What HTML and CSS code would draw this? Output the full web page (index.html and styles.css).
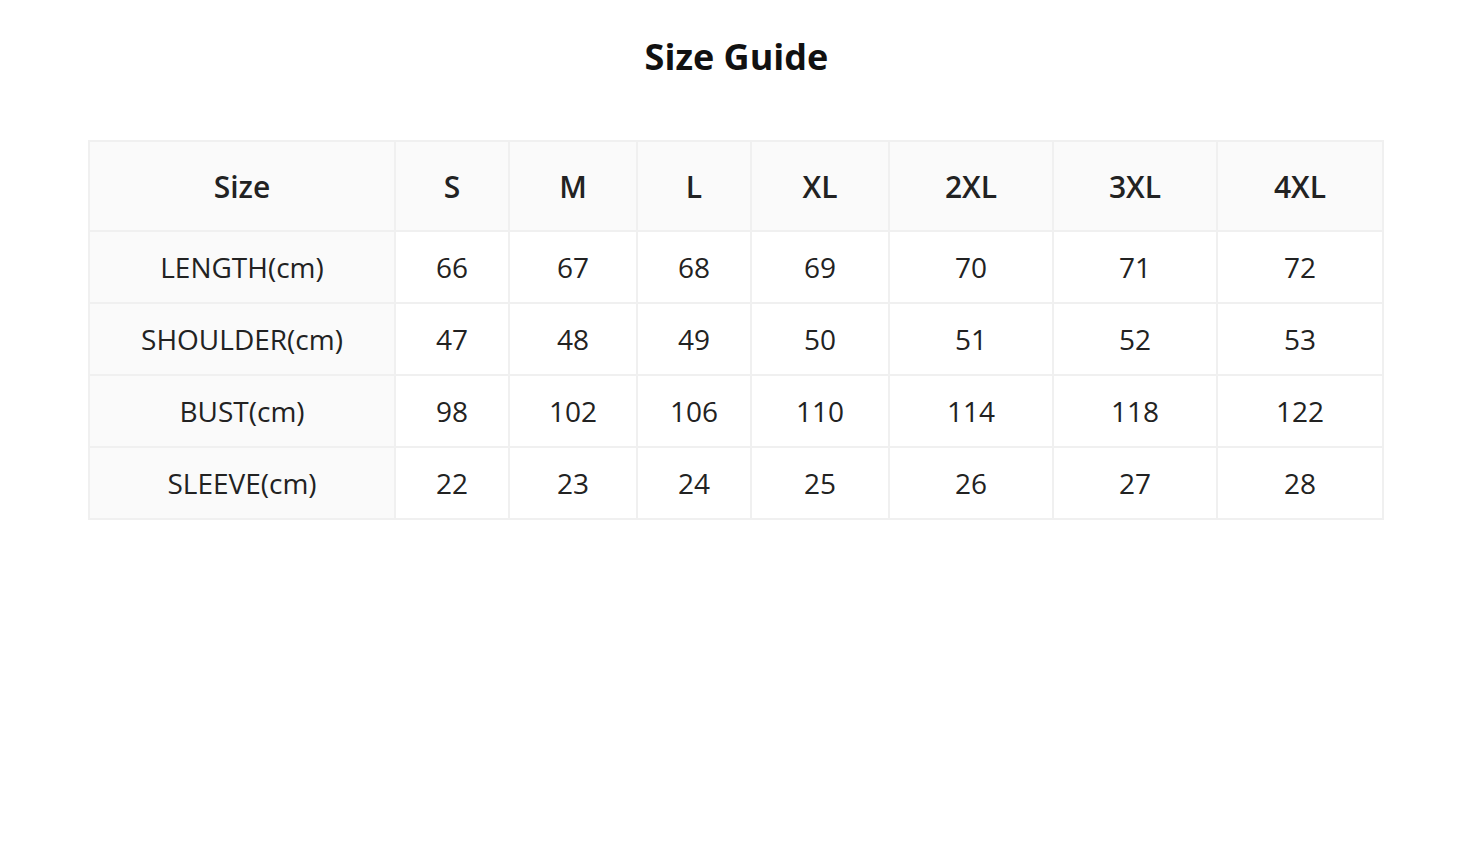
FILE: index.html
```html
<!DOCTYPE html>
<html>
<head>
<meta charset="utf-8">
<link rel="stylesheet" href="styles.css">
</head>
<body>
<div class="page">
  <h1 class="title">Size Guide</h1>
  <table class="sizes">
    <colgroup>
      <col class="c-label"><col class="c-s"><col class="c-m"><col class="c-l"><col class="c-xl"><col class="c-2xl"><col class="c-3xl"><col class="c-4xl">
    </colgroup>
    <thead>
      <tr><th>Size</th><th>S</th><th>M</th><th>L</th><th>XL</th><th>2XL</th><th>3XL</th><th>4XL</th></tr>
    </thead>
    <tbody>
      <tr><td class="label">LENGTH(cm)</td><td>66</td><td>67</td><td>68</td><td>69</td><td>70</td><td>71</td><td>72</td></tr>
      <tr><td class="label">SHOULDER(cm)</td><td>47</td><td>48</td><td>49</td><td>50</td><td>51</td><td>52</td><td>53</td></tr>
      <tr><td class="label">BUST(cm)</td><td>98</td><td>102</td><td>106</td><td>110</td><td>114</td><td>118</td><td>122</td></tr>
      <tr><td class="label">SLEEVE(cm)</td><td>22</td><td>23</td><td>24</td><td>25</td><td>26</td><td>27</td><td>28</td></tr>
    </tbody>
  </table>
</div>
</body>
</html>
```

FILE: styles.css
```css
html, body {
  margin: 0;
  padding: 0;
  background: #ffffff;
}
body {
  font-family: "Open Sans", "Liberation Sans", sans-serif;
  color: #222222;
}
.page {
  padding: 33px 89px 0 88px;
}
.title {
  margin: 0;
  text-align: center;
  font-size: 36px;
  line-height: 48px;
  font-weight: 700;
  color: #111111;
}
.sizes {
  margin: 59px 0 0;
  width: 1296px;
  border-collapse: collapse;
  table-layout: fixed;
  border: 2px solid #f2f2f2;
}
.sizes th,
.sizes td {
  border: 2px solid #f0f0f0;
  text-align: center;
  padding: 0;
}
.sizes th {
  height: 88px;
  background: #fafafa;
  font-size: 30px;
  font-weight: 600;
  color: #222222;
}
.sizes td {
  height: 70px;
  font-size: 28px;
  font-weight: 400;
  color: #222222;
}
.sizes td.label {
  background: #fafafa;
}
.c-label { width: 306px; }
.c-s { width: 114px; }
.c-m { width: 128px; }
.c-l { width: 114px; }
.c-xl { width: 138px; }
.c-2xl { width: 164px; }
.c-3xl { width: 164px; }
.c-4xl { width: 166px; }
```
